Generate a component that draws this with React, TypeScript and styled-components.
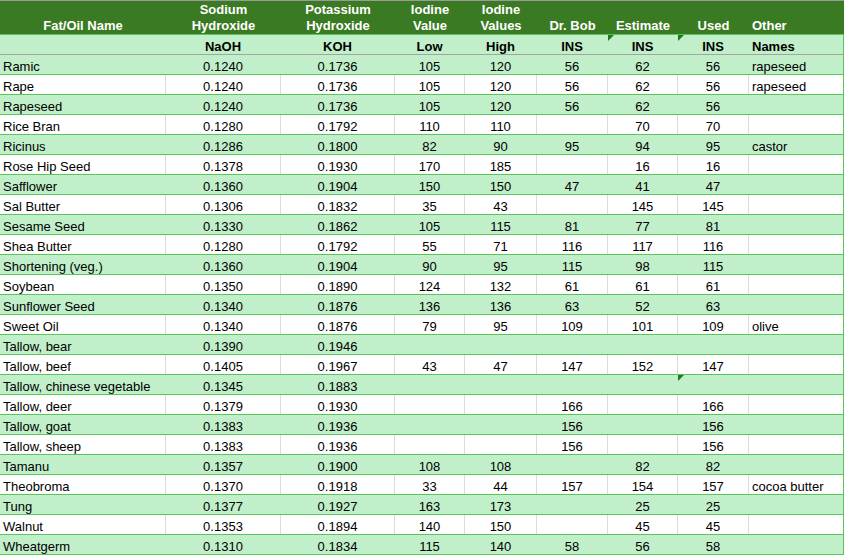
import React from 'react';
import styled, { createGlobalStyle } from 'styled-components';

const GlobalStyle = createGlobalStyle`
  html, body {
    margin: 0;
    padding: 0;
    background: #ffffff;
    font-family: "Liberation Sans", Arial, sans-serif;
  }
`;

const COLS = '166px 115px 114px 70px 72px 71px 70px 71px 94px';

// name, naoh, koh, low, high, drbob, estimate, used, other, flagUsed
type Oil = [string, string, string, string, string, string, string, string, string, boolean?];

const oils: Oil[] = [
  ['Ramic', '0.1240', '0.1736', '105', '120', '56', '62', '56', 'rapeseed'],
  ['Rape', '0.1240', '0.1736', '105', '120', '56', '62', '56', 'rapeseed'],
  ['Rapeseed', '0.1240', '0.1736', '105', '120', '56', '62', '56', ''],
  ['Rice Bran', '0.1280', '0.1792', '110', '110', '', '70', '70', ''],
  ['Ricinus', '0.1286', '0.1800', '82', '90', '95', '94', '95', 'castor'],
  ['Rose Hip Seed', '0.1378', '0.1930', '170', '185', '', '16', '16', ''],
  ['Safflower', '0.1360', '0.1904', '150', '150', '47', '41', '47', ''],
  ['Sal Butter', '0.1306', '0.1832', '35', '43', '', '145', '145', ''],
  ['Sesame Seed', '0.1330', '0.1862', '105', '115', '81', '77', '81', ''],
  ['Shea Butter', '0.1280', '0.1792', '55', '71', '116', '117', '116', ''],
  ['Shortening (veg.)', '0.1360', '0.1904', '90', '95', '115', '98', '115', ''],
  ['Soybean', '0.1350', '0.1890', '124', '132', '61', '61', '61', ''],
  ['Sunflower Seed', '0.1340', '0.1876', '136', '136', '63', '52', '63', ''],
  ['Sweet Oil', '0.1340', '0.1876', '79', '95', '109', '101', '109', 'olive'],
  ['Tallow, bear', '0.1390', '0.1946', '', '', '', '', '', ''],
  ['Tallow, beef', '0.1405', '0.1967', '43', '47', '147', '152', '147', ''],
  ['Tallow, chinese vegetable', '0.1345', '0.1883', '', '', '', '', '', '', true],
  ['Tallow, deer', '0.1379', '0.1930', '', '', '166', '', '166', ''],
  ['Tallow, goat', '0.1383', '0.1936', '', '', '156', '', '156', ''],
  ['Tallow, sheep', '0.1383', '0.1936', '', '', '156', '', '156', ''],
  ['Tamanu', '0.1357', '0.1900', '108', '108', '', '82', '82', ''],
  ['Theobroma', '0.1370', '0.1918', '33', '44', '157', '154', '157', 'cocoa butter'],
  ['Tung', '0.1377', '0.1927', '163', '173', '', '25', '25', ''],
  ['Walnut', '0.1353', '0.1894', '140', '150', '', '45', '45', ''],
  ['Wheatgerm', '0.1310', '0.1834', '115', '140', '58', '56', '58', ''],
];

const Sheet = styled.div`
  width: 844px;
  font-size: 13px;
  color: #000;
`;

const TitleRow = styled.div`
  display: grid;
  grid-template-columns: ${COLS};
  height: 35px;
  box-sizing: border-box;
  border-top: 1px solid #9a9a9a;
  border-bottom: 1px solid #5cc45c;
  background: #3a7a22;
  color: #ffffff;
  font-weight: bold;
`;

const TitleCell = styled.div<{ $left?: boolean }>`
  display: flex;
  flex-direction: column;
  justify-content: flex-end;
  align-items: ${(p) => (p.$left ? 'flex-start' : 'center')};
  padding: 0 0 0 ${(p) => (p.$left ? '3px' : '0')};
  line-height: 16px;
`;

const Row = styled.div<{ $green: boolean; $divider?: boolean }>`
  display: grid;
  grid-template-columns: ${COLS};
  height: 20px;
  box-sizing: border-box;
  background: ${(p) => (p.$green ? '#c1efca' : '#ffffff')};
  border-bottom: 1px solid ${(p) => (p.$divider ? '#a3a3a3' : '#5cc45c')};
  border-right: 1px solid #5cc45c;
`;

const Cell = styled.div<{ $left?: boolean; $lined: boolean; $bold?: boolean }>`
  position: relative;
  display: flex;
  align-items: flex-end;
  justify-content: ${(p) => (p.$left ? 'flex-start' : 'center')};
  padding-left: ${(p) => (p.$left ? '3px' : '0')};
  line-height: 15px;
  border-right: 1px solid ${(p) => (p.$lined ? '#dcdcdc' : 'transparent')};
  font-weight: ${(p) => (p.$bold ? 'bold' : 'normal')};
  white-space: nowrap;
  overflow: hidden;
  &:last-child {
    border-right: none;
  }
`;

const Flag = styled.span`
  position: absolute;
  top: 0;
  left: 0;
  width: 0;
  height: 0;
  border-top: 6px solid #1f7a1f;
  border-right: 6px solid transparent;
`;

const leftCols = [0, 8];

export default function App() {
  const titles: [string, string][] = [
    ['', 'Fat/Oil Name'],
    ['Sodium', 'Hydroxide'],
    ['Potassium', 'Hydroxide'],
    ['Iodine', 'Value'],
    ['Iodine', 'Values'],
    ['', 'Dr. Bob'],
    ['', 'Estimate'],
    ['', 'Used'],
    ['', 'Other'],
  ];
  const sub = ['', 'NaOH', 'KOH', 'Low', 'High', 'INS', 'INS', 'INS', 'Names'];

  return (
    <>
      <GlobalStyle />
      <Sheet>
        <TitleRow>
          {titles.map(([a, b], i) => (
            <TitleCell key={i} $left={i === 8}>
              {a && <span>{a}</span>}
              <span>{b}</span>
            </TitleCell>
          ))}
        </TitleRow>
        <Row $green $divider>
          {sub.map((s, i) => (
            <Cell key={i} $left={i === 8} $lined={false} $bold>
              {(i === 6 || i === 7) && <Flag />}
              {s}
            </Cell>
          ))}
        </Row>
        {oils.map((oil, r) => {
          const green = r % 2 === 0;
          const flagUsed = oil[9];
          return (
            <Row key={oil[0]} $green={green}>
              {oil.slice(0, 9).map((v, i) => (
                <Cell key={i} $left={leftCols.includes(i)} $lined={!green}>
                  {flagUsed && i === 7 && <Flag />}
                  {v as string}
                </Cell>
              ))}
            </Row>
          );
        })}
      </Sheet>
    </>
  );
}
